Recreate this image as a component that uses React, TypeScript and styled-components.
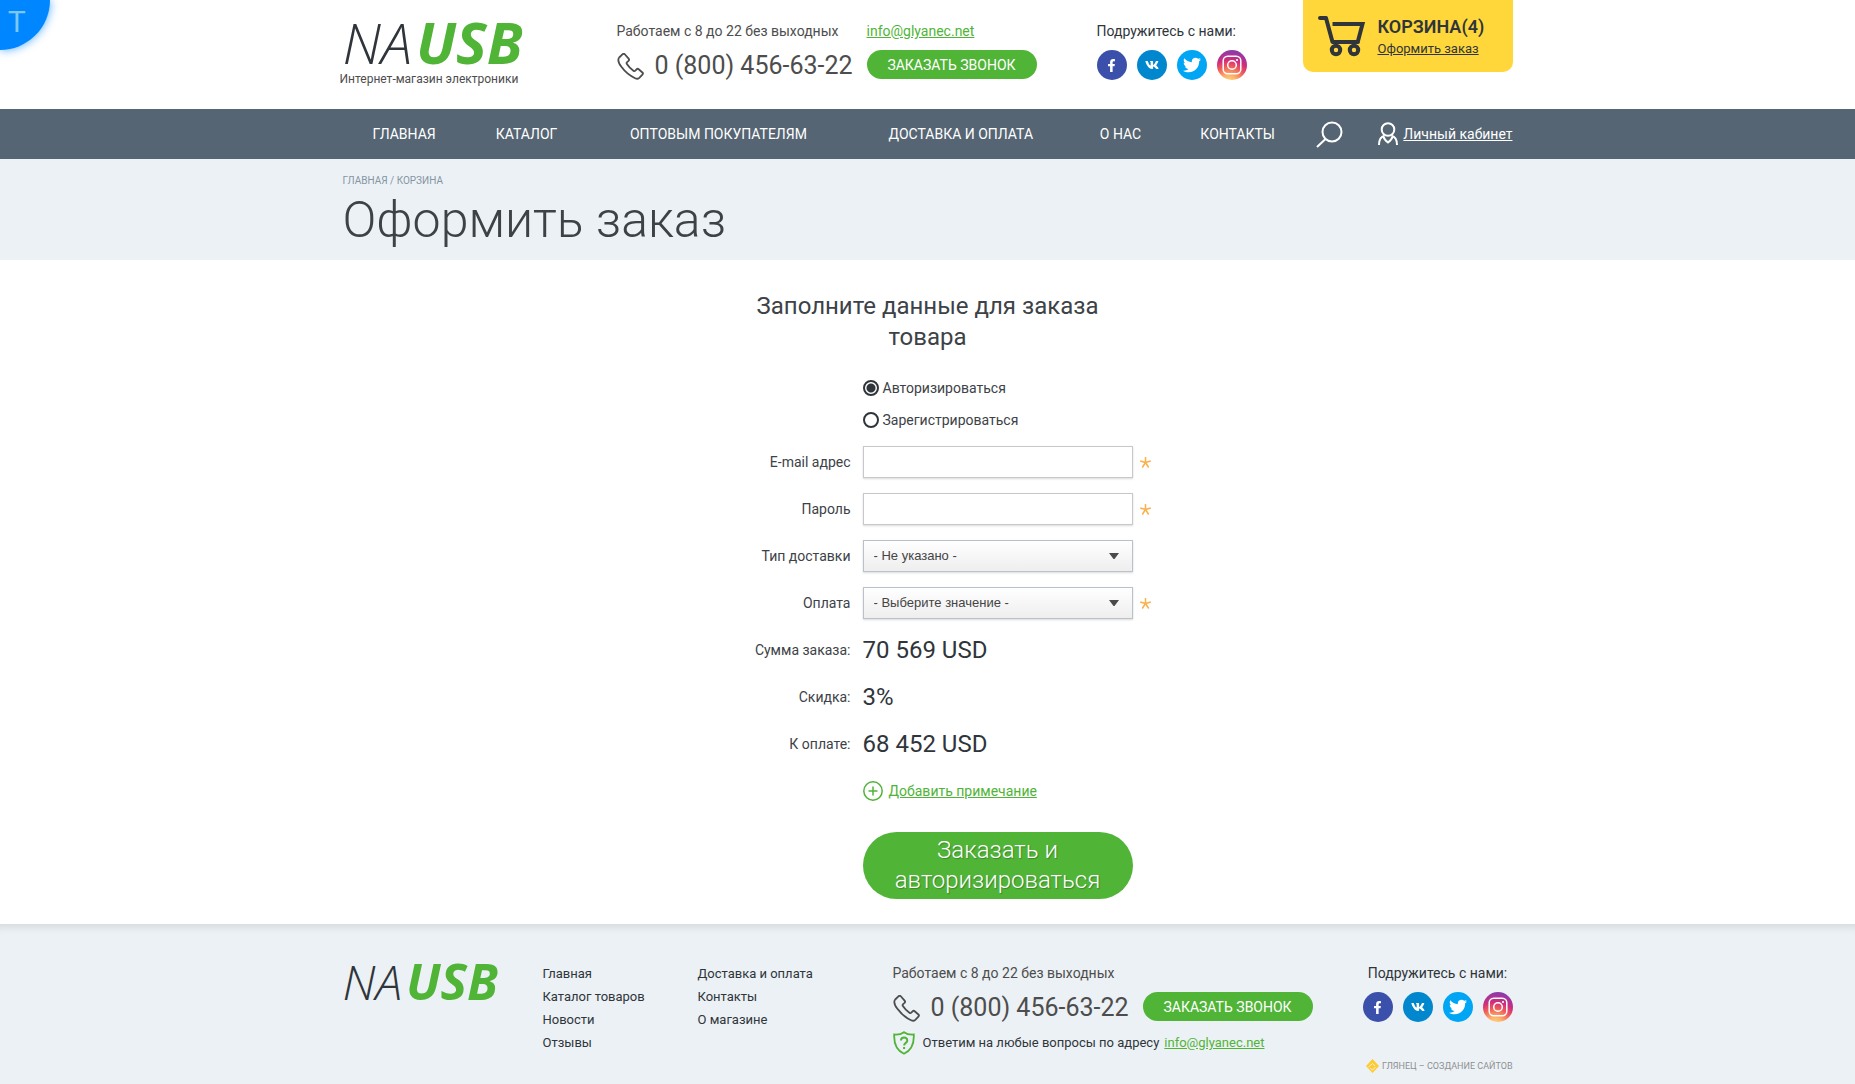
import React, { useState } from "react";
import styled, { createGlobalStyle } from "styled-components";
import { FaFacebookF, FaTwitter, FaVk } from "react-icons/fa";

const GREEN = "#50b437";
const PALE = "#ecf1f5";
const INK = "#2f353a";
const GREY = "#4d4d4d";

const GlobalStyle = createGlobalStyle`
  *, *::before, *::after { box-sizing: border-box; }
  body { margin: 0; background: #fff; color: ${INK}; font: 400 14px/20px Roboto, sans-serif; }
  ul, h1, h2, p { margin: 0; padding: 0; }
  ul { list-style: none; }
  a { color: inherit; text-decoration: none; }
  button, input, select { font: inherit; color: inherit; margin: 0; }
  svg { display: block; flex: none; }
`;

const Container = styled.div`
  width: 100%;
  max-width: 1170px;
  margin: 0 auto;
`;

const CornerBadge = styled.a`
  position: fixed;
  top: 0;
  left: 0;
  width: 50px;
  height: 50px;
  padding: 6px 0 0 8px;
  border-radius: 0 0 50px 0;
  background: #0087ff;
  box-shadow: 0 0 10px rgba(0, 135, 255, 0.7);
  color: #7cc8ef;
  font-size: 30px;
  line-height: 32px;
`;

const HeaderRow = styled(Container)`
  display: flex;
  align-items: flex-start;
  min-height: 109px;
`;

const HeaderLogo = styled.a`
  flex: 0 0 274px;
  display: flex;
  flex-direction: column;
  gap: 1px;
  padding-top: 14px;
`;

const LogoMark = styled.span<{ $size: number }>`
  display: flex;
  align-items: baseline;
  gap: 4px;
  font-family: "Open Sans", sans-serif;
  font-size: ${(p) => p.$size}px;
  line-height: ${(p) => p.$size}px;
  font-style: italic;
  font-weight: 300;
  color: ${INK};
  b {
    font-size: ${(p) => p.$size + 2}px;
    font-weight: 700;
    color: ${GREEN};
  }
`;

const Tagline = styled.span`
  display: block;
  margin-left: -3px;
  font-size: 12px;
  line-height: 16px;
  color: ${GREY};
`;

const HeaderContacts = styled.div`
  flex: 0 0 480px;
  display: grid;
  grid-template-columns: 250px auto;
  justify-items: start;
  align-items: start;
  grid-template-rows: 20px 32px;
  row-gap: 9px;
  padding-top: 21px;
`;

const Hours = styled.p`
  color: ${GREY};
`;

const Phone = styled.a`
  display: flex;
  align-items: center;
  gap: 11px;
  font-size: 25px;
  line-height: 32px;
  color: ${GREY};
  white-space: nowrap;
`;

const MailLink = styled.a`
  color: ${GREEN};
  text-decoration: underline;
`;

const CallButton = styled.button`
  width: 170px;
  height: 29px;
  padding: 0;
  border: 0;
  border-radius: 15px;
  background: ${GREEN};
  color: #fff;
  text-transform: uppercase;
  cursor: pointer;
`;

const SocialBlock = styled.div<{ $top: number }>`
  display: flex;
  flex-direction: column;
  gap: 9px;
  padding-top: ${(p) => p.$top}px;
`;

const SocialTitle = styled.p<{ $center?: boolean }>`
  text-align: ${(p) => (p.$center ? "center" : "left")};
`;

const SocialList = styled.ul`
  display: flex;
  gap: 10px;
`;

const SocialLink = styled.a<{ $bg: string }>`
  display: flex;
  align-items: center;
  justify-content: center;
  width: 30px;
  height: 30px;
  border-radius: 50%;
  background: ${(p) => p.$bg};
  color: #fff;
`;

const Cart = styled.div`
  display: flex;
  gap: 12px;
  width: 210px;
  height: 72px;
  margin-left: auto;
  padding: 15px 0 0 15px;
  border-radius: 0 0 10px 10px;
  background: #ffd73a;
`;

const CartTitle = styled.p`
  font-size: 18px;
  line-height: 24px;
  font-weight: 600;
`;

const CartLink = styled.a`
  display: block;
  font-size: 13px;
  line-height: 20px;
  text-decoration: underline;
`;

const NavBar = styled.nav`
  background: #556573;
  color: #fff;
`;

const NavRow = styled(Container)`
  display: flex;
  align-items: center;
  height: 50px;
`;

const NavMenu = styled.div`
  flex: 1;
`;

const NavList = styled.ul`
  display: table;
  width: 100%;
`;

const NavItem = styled.li`
  display: table-cell;
  padding: 0 19px;
  text-align: center;
  text-transform: uppercase;
  white-space: nowrap;
`;

const SearchButton = styled.button`
  margin: 0 35px 0 10px;
  padding: 0;
  border: 0;
  background: none;
  cursor: pointer;
`;

const Account = styled.a`
  display: flex;
  align-items: center;
  gap: 5px;
  span {
    text-decoration: underline;
  }
`;

const PageHead = styled.div`
  padding: 14px 0 9px;
  background: ${PALE};
`;

const Crumbs = styled.p`
  font-size: 10px;
  line-height: 16px;
  text-transform: uppercase;
  color: #8495a3;
`;

const PageTitle = styled.h1`
  font-size: 50px;
  line-height: 62px;
  font-weight: 300;
  color: #3d4247;
`;

const Form = styled.form`
  width: 450px;
  margin: 0 auto;
  padding: 31px 0 25px;
  color: #3d4247;
`;

const FormTitle = styled.h2`
  padding: 0 45px;
  margin-bottom: 19px;
  font-size: 24px;
  line-height: 31px;
  font-weight: 400;
  text-align: center;
`;

const RadioRow = styled.label`
  display: flex;
  align-items: center;
  gap: 4px;
  height: 32px;
  margin-left: 160px;
`;

const Radio = styled.input`
  appearance: none;
  width: 16px;
  height: 16px;
  border: 2px solid ${INK};
  border-radius: 50%;
  background: #fff;
  &:checked {
    background: radial-gradient(circle, ${INK} 4px, #fff 5px);
  }
`;

const Fields = styled.div`
  display: grid;
  row-gap: 15px;
  padding-top: 10px;
`;

const FieldRow = styled.div`
  display: grid;
  grid-template-columns: 160px 270px 1fr;
  align-items: center;
  height: 32px;
`;

const FieldLabel = styled.label`
  padding-right: 12px;
  text-align: right;
`;

const TextInput = styled.input`
  width: 100%;
  height: 32px;
  padding: 0 10px;
  border: 1px solid #c6c8ca;
  border-radius: 0;
  background: #fff;
  box-shadow: 0 1px 2px rgba(0, 0, 0, 0.15);
`;

const SelectBox = styled.div`
  position: relative;
  svg {
    position: absolute;
    right: 14px;
    top: 13px;
    pointer-events: none;
  }
`;

const Select = styled.select`
  appearance: none;
  display: block;
  width: 100%;
  height: 32px;
  padding: 0 30px 0 10px;
  border: 1px solid #b9c1cb;
  border-radius: 0;
  background: linear-gradient(#fff, #eee);
  box-shadow: 0 1px 2px rgba(0, 0, 0, 0.15);
  font-family: "Liberation Sans", Arial, sans-serif;
  font-size: 13px;
  color: #444;
`;

const RequiredMark = styled.span`
  padding-left: 7px;
`;

const Total = styled.output`
  font-size: 24px;
  line-height: 32px;
  color: ${INK};
  white-space: nowrap;
`;

const NoteButton = styled.button`
  display: flex;
  align-items: center;
  gap: 6px;
  height: 32px;
  margin: 15px 0 0 160px;
  padding: 0;
  border: 0;
  background: none;
  color: ${GREEN};
  cursor: pointer;
  span {
    text-decoration: underline;
  }
`;

const SubmitButton = styled.button`
  display: block;
  width: 270px;
  margin: 25px 0 0 160px;
  padding: 3px 20px 4px;
  border: 0;
  border-radius: 34px;
  background: ${GREEN};
  color: #fff;
  font-size: 24px;
  line-height: 30px;
  font-weight: 300;
  text-shadow: 1px 1px 1px rgba(0, 0, 0, 0.25);
  cursor: pointer;
`;

const Footer = styled.footer`
  min-height: 160px;
  background: ${PALE};
  box-shadow: inset 0 10px 10px -8px rgba(0, 0, 0, 0.12);
`;

const FooterRow = styled(Container)`
  display: flex;
  align-items: flex-start;
`;

const FooterLogo = styled.a`
  flex: 0 0 200px;
  padding-top: 33px;
`;

const FooterLinks = styled.ul<{ $width: number }>`
  flex: 0 0 ${(p) => p.$width}px;
  padding-top: 38px;
  font-size: 13px;
  line-height: 23px;
`;

const FooterContacts = styled.div`
  display: grid;
  row-gap: 9px;
  padding-top: 39px;
`;

const FooterPhoneRow = styled.div`
  display: flex;
  align-items: flex-start;
  gap: 14px;
  height: 30px;
`;

const Question = styled.p`
  display: flex;
  align-items: center;
  font-size: 13px;
  line-height: 24px;
  svg { margin-right: 8px; }
  a { margin-left: 5px; }
`;

const FooterSide = styled.div`
  display: flex;
  flex-direction: column;
  align-items: flex-end;
  margin-left: auto;
`;

const Studio = styled.a`
  display: flex;
  align-items: center;
  gap: 3px;
  margin-top: 35px;
  font-size: 9px;
  line-height: 18px;
  color: #8d9092;
  white-space: nowrap;
`;

const Logo = ({ size }: { size: number }) => (
  <LogoMark $size={size}>
    <span>NA</span>
    <b>USB</b>
  </LogoMark>
);

const PhoneIcon = () => (
  <svg width="27" height="27" viewBox="0 0 27 27" fill="none" stroke="#4d4d4d" strokeWidth="1.8" strokeLinejoin="round">
    <path d="M5.4 1.4 2.2 4.5C.7 6.200 1.200 9.400 4.200 13.600c3.500 4.900 8.600 9.300 14.400 11.900 1.500.6 2.600.3 3.700-.7l3.100-3.100c.7-.7.7-1.500 0-2.200l-3.700-3.200c-.7-.6-1.500-.6-2.100 0l-1.300 1.400c-.6.6-1.200.6-1.900.1-2.800-1.900-4.900-4.200-6.500-6.700-.5-.8-.4-1.400.2-2l1.400-1.200c.7-.7.7-1.500.1-2.200L8 1.500c-.8-.9-1.800-.9-2.600-.1Z" />
  </svg>
);

const CartIcon = () => (
  <svg width="48" height="42" viewBox="0 0 48 42" fill="none" stroke="#2f353a">
    <path d="M2 3h6l6.500 24H40" strokeWidth="4" strokeLinecap="round" strokeLinejoin="round" />
    <path d="M14.500 9h30L40 26" strokeWidth="4" />
    <circle cx="18" cy="35" r="4.200" strokeWidth="4" />
    <circle cx="36" cy="35" r="4.200" strokeWidth="4" />
  </svg>
);

const SearchIcon = () => (
  <svg width="27" height="27" viewBox="0 0 27 27" fill="none" stroke="#fff" strokeWidth="2">
    <circle cx="16" cy="11" r="9.500" />
    <path d="M9.500 18 1 26" />
  </svg>
);

const UserIcon = () => (
  <svg width="20" height="24" viewBox="0 0 20 24" fill="none" stroke="#fff" strokeWidth="2">
    <circle cx="10" cy="7.500" r="6.300" />
    <path d="M1 23c0-5 2-8.500 5.500-9.300M19 23c0-5-2-8.500-5.500-9.300M5.500 14.500c.5 3 2.500 4.500 4.500 6 2-1.500 4-3 4.500-6" />
  </svg>
);

const InstagramIcon = () => (
  <svg width="20" height="20" viewBox="0 0 20 20" fill="none" stroke="#fff" strokeWidth="1.500">
    <rect x="1.200" y="1.200" width="17.600" height="17.600" rx="4.500" />
    <circle cx="10" cy="10" r="4.300" />
    <circle cx="15" cy="5" r="1.100" fill="#fff" stroke="none" />
  </svg>
);

const PlusIcon = () => (
  <svg width="20" height="20" viewBox="0 0 20 20" fill="none" stroke={GREEN} strokeWidth="1.500">
    <circle cx="10" cy="10" r="9.200" />
    <path d="M10 5.500v9M5.500 10h9" />
  </svg>
);

const ShieldIcon = () => (
  <svg width="22" height="24" viewBox="0 0 22 24" fill="none" stroke={GREEN} strokeWidth="1.800">
    <path d="M11 1.200C8.500 3 5 3.800 1.200 3.500c-.4 8.500 1.500 15.500 9.800 19.200 8.300-3.700 10.200-10.700 9.800-19.200C17 3.800 13.500 3 11 1.200Z" />
    <path d="M8 9.500c0-4 6.300-4 6.300 0 0 2.500-3.200 2.200-3.200 5M11.100 16v2" strokeWidth="2" />
  </svg>
);

const StudioIcon = () => (
  <svg width="13" height="14" viewBox="0 0 13 14">
    <path d="M6.500 0 13 7l-6.500 7L0 7Z" fill="#ffcb2d" />
    <path d="M2.500 8 6.500 4.500 9 7M4.200 9.200 6.500 11 9.500 8" fill="none" stroke={PALE} strokeWidth="1" />
  </svg>
);

const Caret = () => (
  <svg width="10" height="6" viewBox="0 0 10 6" fill="#4a4a4a">
    <path d="M0 0h10L5.500 6h-1Z" />
  </svg>
);

const INSTAGRAM_BG =
  "radial-gradient(circle at 40% 110%, #fedb84 0%, #fdb56a 20%, #ee5a5a 45%, #cf2c7e 62%, #8e3aa8 85%, #5b51d8 105%)";

const socials = [
  { name: "Facebook", bg: "#3b50ab", icon: <FaFacebookF size={13} /> },
  { name: "ВКонтакте", bg: "#0087cd", icon: <FaVk size={14} /> },
  { name: "Twitter", bg: "#00a6f3", icon: <FaTwitter size={18} /> },
  { name: "Instagram", bg: INSTAGRAM_BG, icon: <InstagramIcon /> },
];

const Socials = ({ top, center }: { top: number; center?: boolean }) => (
  <SocialBlock $top={top}>
    <SocialTitle $center={center}>Подружитесь с нами:</SocialTitle>
    <SocialList>
      {socials.map((s) => (
        <li key={s.name}>
          <SocialLink href="#" $bg={s.bg} aria-label={s.name}>
            {s.icon}
          </SocialLink>
        </li>
      ))}
    </SocialList>
  </SocialBlock>
);

const PhoneLink = () => (
  <Phone href="tel:08004566322">
    <PhoneIcon />0 (800) 456-63-22
  </Phone>
);

const Required = () => (
  <RequiredMark>
    <svg width="11" height="11" viewBox="0 0 11 11" stroke="#fbb04c" strokeWidth="1.500" aria-hidden="true">
      <path d="M5.500 0v5.500M.2 4l5.300 1.500M10.800 4 5.500 5.500M2.300 10.500l3.200-5M8.700 10.500l-3.200-5" />
    </svg>
  </RequiredMark>
);

const navItems = ["Главная", "Каталог", "Оптовым покупателям", "Доставка и оплата", "О нас", "Контакты"];
const footerMain = ["Главная", "Каталог товаров", "Новости", "Отзывы"];
const footerInfo = ["Доставка и оплата", "Контакты", "О магазине"];
const totals = [
  ["Сумма заказа:", "70 569 USD"],
  ["Скидка:", "3%"],
  ["К оплате:", "68 452 USD"],
];

const LinkColumn = ({ items, width }: { items: string[]; width: number }) => (
  <FooterLinks $width={width}>
    {items.map((item) => (
      <li key={item}>
        <a href="#">{item}</a>
      </li>
    ))}
  </FooterLinks>
);

export default function App() {
  const [mode, setMode] = useState("login");

  return (
    <>
      <GlobalStyle />
      <header>
        <HeaderRow>
          <HeaderLogo href="#">
            <Logo size={56} />
            <Tagline>Интернет-магазин электроники</Tagline>
          </HeaderLogo>
          <HeaderContacts>
            <Hours>Работаем с 8 до 22 без выходных</Hours>
            <MailLink href="mailto:info@glyanec.net">info@glyanec.net</MailLink>
            <PhoneLink />
            <CallButton type="button">Заказать звонок</CallButton>
          </HeaderContacts>
          <Socials top={21} />
          <Cart>
            <CartIcon />
            <div>
              <CartTitle>КОРЗИНА(4)</CartTitle>
              <CartLink href="#">Оформить заказ</CartLink>
            </div>
          </Cart>
        </HeaderRow>
        <NavBar>
          <NavRow>
            <NavMenu>
              <NavList>
                {navItems.map((item) => (
                  <NavItem key={item}>
                    <a href="#">{item}</a>
                  </NavItem>
                ))}
              </NavList>
            </NavMenu>
            <SearchButton type="button" aria-label="Поиск">
              <SearchIcon />
            </SearchButton>
            <Account href="#">
              <UserIcon />
              <span>Личный кабинет</span>
            </Account>
          </NavRow>
        </NavBar>
      </header>

      <main>
        <PageHead>
          <Container>
            <Crumbs>
              <a href="#">Главная</a> / Корзина
            </Crumbs>
            <PageTitle>Оформить заказ</PageTitle>
          </Container>
        </PageHead>

        <Form onSubmit={(e) => e.preventDefault()}>
          <FormTitle>Заполните данные для заказа товара</FormTitle>
          <RadioRow>
            <Radio type="radio" name="mode" checked={mode === "login"} onChange={() => setMode("login")} />
            Авторизироваться
          </RadioRow>
          <RadioRow>
            <Radio type="radio" name="mode" checked={mode === "register"} onChange={() => setMode("register")} />
            Зарегистрироваться
          </RadioRow>
          <Fields>
            <FieldRow>
              <FieldLabel htmlFor="email">E-mail адрес</FieldLabel>
              <TextInput id="email" type="email" />
              <Required />
            </FieldRow>
            <FieldRow>
              <FieldLabel htmlFor="password">Пароль</FieldLabel>
              <TextInput id="password" type="password" />
              <Required />
            </FieldRow>
            <FieldRow>
              <FieldLabel htmlFor="delivery">Тип доставки</FieldLabel>
              <SelectBox>
                <Select id="delivery">
                  <option>- Не указано -</option>
                </Select>
                <Caret />
              </SelectBox>
            </FieldRow>
            <FieldRow>
              <FieldLabel htmlFor="payment">Оплата</FieldLabel>
              <SelectBox>
                <Select id="payment">
                  <option>- Выберите значение -</option>
                </Select>
                <Caret />
              </SelectBox>
              <Required />
            </FieldRow>
            {totals.map(([label, value], i) => (
              <FieldRow key={label}>
                <FieldLabel htmlFor={`total-${i}`}>{label}</FieldLabel>
                <Total id={`total-${i}`}>{value}</Total>
              </FieldRow>
            ))}
          </Fields>
          <NoteButton type="button">
            <PlusIcon />
            <span>Добавить примечание</span>
          </NoteButton>
          <SubmitButton type="submit">Заказать и авторизироваться</SubmitButton>
        </Form>
      </main>

      <Footer>
        <FooterRow>
          <FooterLogo href="#">
            <Logo size={48} />
          </FooterLogo>
          <LinkColumn items={footerMain} width={155} />
          <LinkColumn items={footerInfo} width={195} />
          <FooterContacts>
            <Hours>Работаем с 8 до 22 без выходных</Hours>
            <FooterPhoneRow>
              <PhoneLink />
              <CallButton type="button">Заказать звонок</CallButton>
            </FooterPhoneRow>
            <Question>
              <ShieldIcon />
              Ответим на любые вопросы по адресу
              <MailLink href="mailto:info@glyanec.net">info@glyanec.net</MailLink>
            </Question>
          </FooterContacts>
          <FooterSide>
            <Socials top={39} center />
            <Studio href="#">
              <StudioIcon />
              ГЛЯНЕЦ – СОЗДАНИЕ САЙТОВ
            </Studio>
          </FooterSide>
        </FooterRow>
      </Footer>
      <CornerBadge href="#" aria-label="Тема">T</CornerBadge>
    </>
  );
}
